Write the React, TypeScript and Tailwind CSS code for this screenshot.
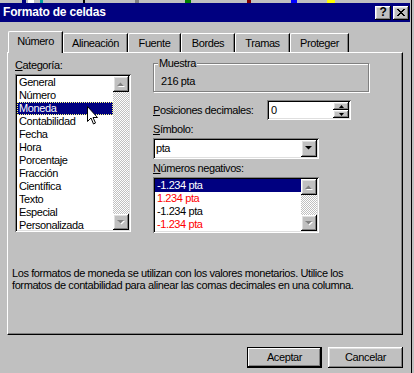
import { ReactNode } from "react";

const raised =
  "shadow-[inset_-1px_-1px_0_#000,inset_1px_1px_0_#fff,inset_-2px_-2px_0_#808080,inset_2px_2px_0_#dfdfdf]";
const sunken =
  "shadow-[inset_1px_1px_0_#808080,inset_-1px_-1px_0_#fff,inset_2px_2px_0_#000,inset_-2px_-2px_0_#dfdfdf]";
const checker =
  "bg-[conic-gradient(#fff_25%,#c0c0c0_0_50%,#fff_0_75%,#c0c0c0_0)] bg-[length:2px_2px]";

const categories = [
  "General",
  "Número",
  "Moneda",
  "Contabilidad",
  "Fecha",
  "Hora",
  "Porcentaje",
  "Fracción",
  "Científica",
  "Texto",
  "Especial",
  "Personalizada",
];

const negatives = [
  { text: "-1.234 pta", red: false },
  { text: "1.234 pta", red: true },
  { text: "-1.234 pta", red: false },
  { text: "-1.234 pta", red: true },
];

const tabs = [
  { label: "Alineación", w: "w-[65px]" },
  { label: "Fuente", w: "w-[53px]" },
  { label: "Bordes", w: "w-[54px]" },
  { label: "Tramas", w: "w-[55px]" },
  { label: "Proteger", w: "w-[59px]" },
];

function Arrow({ up, disabled }: { up?: boolean; disabled?: boolean }) {
  const pts = up ? "0,4 7,4 3.5,0.5" : "0,0 7,0 3.5,3.5";
  return (
    <svg width="8" height="5" viewBox="0 0 8 5">
      {disabled && <polygon points={pts} fill="#fff" transform="translate(1,1)" />}
      <polygon points={pts} fill={disabled ? "#808080" : "#000"} />
    </svg>
  );
}

function ScrollBar({ h }: { h: string }) {
  return (
    <div className={`w-[16px] ${h} flex flex-col ${checker}`}>
      <div className={`h-[16px] bg-[#c0c0c0] ${raised} flex items-center justify-center`}>
        <Arrow up disabled />
      </div>
      <div className="flex-1" />
      <div className={`h-[16px] bg-[#c0c0c0] ${raised} flex items-center justify-center`}>
        <Arrow disabled />
      </div>
    </div>
  );
}

function Label({ u, rest }: { u: string; rest: string }) {
  return (
    <div className="h-[13px] leading-[13px]">
      <span className="underline underline-offset-[1px]">{u}</span>
      {rest}
    </div>
  );
}

function Btn({ children, def }: { children: ReactNode; def?: boolean }) {
  return (
    <div
      className={`w-[75px] h-[21px] flex items-center justify-center bg-[#c0c0c0] ${
        def
          ? "border border-black shadow-[inset_-1px_-1px_0_#000,inset_1px_1px_0_#fff,inset_-2px_-2px_0_#808080]"
          : raised
      }`}
    >
      {children}
    </div>
  );
}

export default function App() {
  return (
    <div className="w-[414px] h-[373px] bg-[#c0c0c0] overflow-hidden font-['Liberation_Sans',Arial,sans-serif] text-[11px] tracking-[-0.4px] text-black">
      <div className="w-[412px] h-full border-r border-black">
        {/* strip of the toolbar behind */}
        <div className="h-[3px] flex">
          <div className="w-[22px]" />
          <div className="w-[4px] bg-[#000080]" />
          <div className="w-[6px] bg-white ml-[2px]" />
          <div className="w-[3px] bg-[#00a0a0] ml-[6px]" />
          <div className="w-[2px] bg-black ml-[40px]" />
          <div className="w-[4px] bg-[#808080] ml-[50px]" />
          <div className="w-[6px] bg-[#008000] ml-[46px]" />
          <div className="w-[4px] bg-[#800000] ml-[56px]" />
          <div className="w-[6px] bg-[#0000ff] ml-[40px]" />
          <div className="w-[8px] bg-[#ffff00] ml-[30px]" />
        </div>

        {/* title bar */}
        <div className="mr-[1px] h-[19px] bg-[#000080] flex items-center pl-[3px] pr-[1px]">
          <div className="text-white font-bold text-[12px] tracking-[-0.2px] leading-[19px] flex-1">Formato de celdas</div>
          <div className={`w-[16px] h-[14px] bg-[#c0c0c0] ${raised} flex items-center justify-center font-bold text-[12px] leading-none pb-[1px]`}>
            ?
          </div>
          <div className={`ml-[2px] w-[16px] h-[14px] bg-[#c0c0c0] ${raised} flex items-center justify-center`}>
            <svg width="8" height="7" viewBox="0 0 8 7">
              <path d="M0 0 L7 7 M1 0 L8 7 M7 0 L0 7 M8 0 L1 7" stroke="#000" strokeWidth="1" />
            </svg>
          </div>
        </div>

        {/* tabs */}
        <div className="mt-[9px] h-[21px] flex items-end pl-[8px]">
          <div className="relative z-10 w-[55px] h-[22px] -mb-[1px] bg-[#c0c0c0] border-l border-t border-white rounded-tl-[2px] border-r border-r-black shadow-[inset_-1px_0_0_#808080] flex items-center justify-center pb-[2px]">
            Número
          </div>
          {tabs.map((t) => (
            <div
              key={t.label}
              className={`${t.w} h-[19px] border-l border-t border-white rounded-tl-[2px] border-r border-r-black shadow-[inset_-1px_0_0_#808080] flex items-center justify-center`}
            >
              {t.label}
            </div>
          ))}
        </div>

        {/* panel */}
        <div className="ml-[7px] w-[396px] h-[283px] border-t border-l border-white border-r border-b border-r-black border-b-black shadow-[inset_-1px_-1px_0_#808080] flex flex-col">
          <div className="flex pl-[7px] pt-[6px]">
            {/* left column */}
            <div className="w-[116px]">
              <Label u="C" rest="ategoría:" />
              <div className={`relative mt-[2px] h-[158px] bg-white ${sunken} p-[2px] flex`}>
                <div className="flex-1">
                  {categories.map((c) => (
                    <div
                      key={c}
                      className={`h-[13px] leading-[13px] pl-[2px] ${
                        c === "Moneda"
                          ? "bg-[#000080] text-white outline-1 outline-dotted outline-[#ffff80] -outline-offset-1"
                          : ""
                      }`}
                    >
                      {c}
                    </div>
                  ))}
                </div>
                <ScrollBar h="h-[154px]" />
                <svg className="absolute left-[72px] top-[32px]" width="12" height="19" viewBox="0 0 12 19">
                  <path
                    d="M0.5 0.5 L0.5 15.5 L4 12 L6.5 18 L8.5 17 L6 11.5 L10.5 11.5 Z"
                    fill="#fff"
                    stroke="#000"
                    strokeWidth="1"
                  />
                </svg>
              </div>
            </div>

            {/* right column */}
            <div className="ml-[22px] w-[216px]">
              <div className="relative mt-[4px] h-[29px] border border-[#808080] shadow-[1px_1px_0_#fff,inset_1px_1px_0_#fff]">
                <div className="absolute left-[4px] -top-[7px] px-[1px] bg-[#c0c0c0] leading-[13px]">Muestra</div>
                <div className="pl-[7px] pt-[11px] leading-[13px]">216 pta</div>
              </div>

              <div className="mt-[8px] flex items-center">
                <div className="w-[114px]">
                  <Label u="P" rest="osiciones decimales:" />
                </div>
                <div className={`w-[84px] h-[20px] bg-white ${sunken} flex items-center p-[2px]`}>
                  <div className="flex-1 pl-[2px]">0</div>
                  <div className="flex flex-col w-[16px] h-[16px]">
                    <div className={`h-[8px] bg-[#c0c0c0] ${raised} flex items-center justify-center`}>
                      <svg width="5" height="3" viewBox="0 0 5 3">
                        <polygon points="0,3 5,3 2.5,0" fill="#000" />
                      </svg>
                    </div>
                    <div className={`h-[8px] bg-[#c0c0c0] ${raised} flex items-center justify-center`}>
                      <svg width="5" height="3" viewBox="0 0 5 3">
                        <polygon points="0,0 5,0 2.5,3" fill="#000" />
                      </svg>
                    </div>
                  </div>
                </div>
              </div>

              <div className="mt-[3px]">
                <Label u="S" rest="ímbolo:" />
              </div>
              <div className={`mt-[2px] w-[166px] h-[21px] bg-white ${sunken} p-[2px] flex items-center`}>
                <div className="flex-1 pl-[1px]">pta</div>
                <div className={`w-[16px] h-[17px] bg-[#c0c0c0] ${raised} flex items-center justify-center`}>
                  <Arrow />
                </div>
              </div>

              <div className="mt-[3px]">
                <Label u="N" rest="úmeros negativos:" />
              </div>
              <div className={`mt-[2px] w-[166px] h-[56px] bg-white ${sunken} p-[2px] flex`}>
                <div className="flex-1">
                  {negatives.map((n, i) => (
                    <div
                      key={i}
                      className={`h-[13px] leading-[13px] pl-[2px] ${
                        i === 0 ? "bg-[#000080] text-white" : n.red ? "text-[#ff0000]" : ""
                      }`}
                    >
                      {n.text}
                    </div>
                  ))}
                </div>
                <ScrollBar h="h-[52px]" />
              </div>
            </div>
          </div>

          <div className="mt-[34px] pl-[4px] leading-[12px]">
            Los formatos de moneda se utilizan con los valores monetarios. Utilice los
            <br />
            formatos de contabilidad para alinear las comas decimales en una columna.
          </div>
        </div>

        {/* buttons */}
        <div className="mt-[12px] flex justify-end gap-[6px] pr-[8px]">
          <Btn def>Aceptar</Btn>
          <Btn>Cancelar</Btn>
        </div>
      </div>
    </div>
  );
}
